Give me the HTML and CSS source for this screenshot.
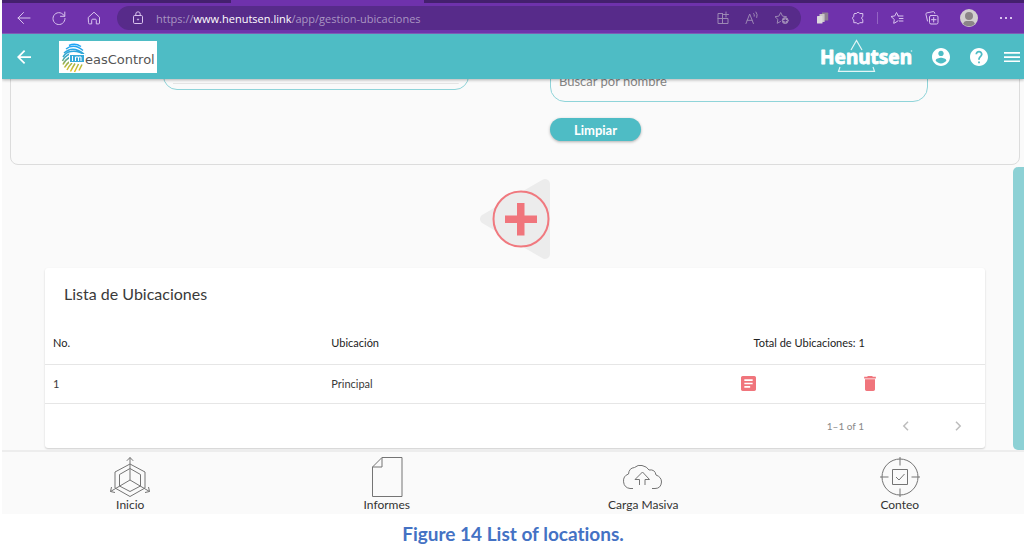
FILE: index.html
```html
<!DOCTYPE html>
<html lang="es">
<head>
<meta charset="utf-8">
<meta name="viewport" content="width=device-width, initial-scale=1">
<title>Henutsen</title>
<link rel="stylesheet" href="styles.css">
</head>
<body>
<figure class="shot">
  <div class="browser">
    <div class="tabstrip"><div class="tab"></div></div>
    <div class="toolbar">
      <button class="tool" aria-label="Atrás"><svg width="14" height="14" viewBox="0 0 14 14"><path d="M13 7H1M6.500 1.500L1 7l5.500 5.500"/></svg></button>
      <button class="tool" aria-label="Actualizar"><svg width="14" height="14" viewBox="0 0 14 14"><path d="M12.500 5.200A6 6 0 1 0 13 7.500M12.800 1v4.300H8.500"/></svg></button>
      <button class="tool" aria-label="Página principal"><svg width="14" height="14" viewBox="0 0 14 14"><path d="M1.500 6.200L7 1.200l5.500 5V12q0 .9-.9.900H9.300V9.200a1 1 0 0 0-1-1H5.700a1 1 0 0 0-1 1v3.700H2.400q-.9 0-.9-.9z"/></svg></button>
      <div class="address">
        <svg class="lock" width="12" height="14" viewBox="0 0 12 14"><rect x="1.500" y="4.500" width="9" height="8" rx="1.200"/><path d="M3.800 4.500V3a2.200 2.200 0 0 1 4.400 0v1.500"/><circle cx="6" cy="8.500" r=".6"/></svg>
        <span class="url">https://<b>www.henutsen.link</b>/app/gestion-ubicaciones</span>
        <button class="tool dim" aria-label="Aplicaciones"><svg width="14" height="14" viewBox="0 0 14 14"><path d="M6.500 2.500H2v10h10V7.500H2M6.500 2.500v10M10 1v5M7.500 3.500h5"/></svg></button>
        <button class="tool dim" aria-label="Leer en voz alta"><svg width="14" height="14" viewBox="0 0 14 14"><path d="M1 12.500L4.700 3l3.700 9.500M2.200 9.300h5M8.700 2.500q1 1.200.6 2.700M11 1q2 2.500.8 5.500"/></svg></button>
        <button class="tool dim" aria-label="Agregar a favoritos"><svg width="16" height="14" viewBox="0 0 16 14"><path d="M6.500 10.500L3.200 12.300l.7-3.900L1 5.700l3.900-.6L6.700 1.500l1.800 3.600 3.900.6"/><circle cx="11.200" cy="9.600" r="3" fill="#a897bd"/><path stroke="#572b8a" d="M11.200 8v3.200M9.600 9.600h3.200"/></svg></button>
      </div>
      <button class="tool" aria-label="Colecciones"><svg width="14" height="14" viewBox="0 0 14 14"><path stroke="none" fill="#8d7f91" d="M6 1.500h5.500q.7 0 .7.700V9.500H6z"/><path stroke="none" fill="#c9c5c7" d="M3.500 3H8q.6 0 .6.600V11H3.500z"/><rect stroke="none" fill="#dcd8dc" x="1" y="5" width="5.500" height="7.500" rx=".6"/></svg></button>
      <button class="tool" aria-label="Extensiones"><svg width="14" height="14" viewBox="0 0 14 14"><path d="M4 2.500h1.500a1.700 1.700 0 0 1 3.200 0h3.100v3a1.700 1.700 0 0 0 0 3.200v3H8.700a1.700 1.700 0 0 1-3.200 0H2.800V8.900a1.700 1.700 0 0 1 0-3.300V3.700q0-1.200 1.200-1.200z"/></svg></button>
      <span class="rule"></span>
      <button class="tool" aria-label="Favoritos"><svg width="14" height="14" viewBox="0 0 14 14"><path d="M8 9.800L5 11.800l-1.300.5.600-3.800L1 5.500l3.800-.6L6.500 1.500l1.700 3.400M8.300 5H13M9.300 7.500H13M9.300 10H13"/></svg></button>
      <button class="tool" aria-label="Pestañas"><svg width="14" height="14" viewBox="0 0 14 14"><rect x="4.500" y="4.500" width="8.500" height="8.500" rx="1.500"/><path d="M8.700 6.500v4.500M6.500 8.700H11M2.500 10L.9 3.200q-.2-1 .9-1.300l6.500-1.300q1.100-.2 1.500 1.700"/></svg></button>
      <button class="tool" aria-label="Perfil"><svg width="18" height="18" viewBox="0 0 18 18" stroke="none"><circle cx="9" cy="9" r="9" fill="#d3cfd0" stroke="none"/><circle cx="9" cy="7" r="4" fill="#8c8588" stroke="none"/><path fill="#8c8588" stroke="none" d="M3 15q1-3 3-3h6q2 0 3 3a9 9 0 0 1-12 0"/></svg></button>
      <button class="tool" aria-label="Más"><svg width="14" height="14" viewBox="0 0 14 14"><path stroke="none" fill="#d9c4ee" d="M1 6h2v2H1zM6 6h2v2H6zM11 6h2v2h-2z"/></svg></button>
    </div>
  </div>

  <div class="app">
    <header class="appbar">
      <button class="icon back" aria-label="Volver"><svg width="14" height="14" viewBox="4 4 16 16"><path fill="#fff" d="M20 11H7.830l5.590-5.590L12 4l-8 8 8 8 1.410-1.410L7.830 13H20v-2z"/></svg></button>
      <svg class="client" width="98" height="32" viewBox="0 0 98 32" role="img" aria-label="easControl">
        <defs><linearGradient id="print" gradientUnits="userSpaceOnUse" x1="0" y1="2" x2="0" y2="31"><stop offset=".1" stop-color="#1fa4f5"/><stop offset=".5" stop-color="#3ba7c0"/><stop offset=".7" stop-color="#9fb24a"/><stop offset="1" stop-color="#e8c51f"/></linearGradient></defs>
        <rect width="98" height="32" fill="#fff"/>
        <path fill="none" stroke="url(#print)" stroke-width="1.500" d="M10 4.500q6-3 12 1M7 8q8-6 17 1.500M5 12q9-8 20 1M4 16q3-5 8-5.500q8-1 14 4M3.500 20q2-4.500 7-7M4 23.500q2-4.500 7-7.500M5.500 26.500q2-4 6-6.500M8 29q2-4 5-7M11.500 30.500q2-4 4.500-8M15.500 31q2-4 4-8M20 29.500q1.500-3 3-6"/>
        <rect x="10.500" y="13.500" width="15" height="8" fill="#35a9da" stroke="#fff"/>
        <path fill="none" stroke="#fff" d="M13.500 15v5M16.500 20v-4h3v4M22 20v-4h-2"/>
        <text x="26" y="23" font-family="DejaVu Sans" font-size="13" fill="#555">easControl</text>
      </svg>
      <svg class="brand" width="94" height="36" viewBox="0 0 94 36" role="img" aria-label="Henutsen">
        <path fill="none" stroke="#e4f5f6" stroke-width="1.200" d="M32 11L37.500 1.500 43 11M21 28l-1.500 4.400h36L54 28"/>
        <text x="1" y="25" font-family="Noto Sans" font-weight="700" font-size="19" fill="#fff" stroke="#fff" stroke-width=".9" stroke-linejoin="round">Henutsen</text>
        <circle cx="92.500" cy="12" r=".8" fill="#d5f0f2"/>
      </svg>
      <button class="icon" aria-label="Cuenta"><svg width="18" height="18" viewBox="2 2 20 20"><path fill="#fff" d="M12 2C6.480 2 2 6.480 2 12s4.480 10 10 10 10-4.480 10-10S17.520 2 12 2zm0 3c1.660 0 3 1.340 3 3s-1.340 3-3 3-3-1.340-3-3 1.340-3 3-3zm0 14.200c-2.500 0-4.710-1.280-6-3.220.030-1.990 4-3.080 6-3.080 1.990 0 5.970 1.090 6 3.080-1.290 1.940-3.500 3.220-6 3.220z"/></svg></button>
      <button class="icon" aria-label="Ayuda"><svg width="18" height="18" viewBox="2 2 20 20"><path fill="#fff" d="M12 2C6.480 2 2 6.480 2 12s4.480 10 10 10 10-4.480 10-10S17.520 2 12 2zm1 17h-2v-2h2v2zm2.070-7.750l-.9.920C13.450 12.900 13 13.500 13 15h-2v-.5c0-1.100.45-2.100 1.170-2.830l1.240-1.260c.37-.36.59-.86.59-1.410 0-1.100-.9-2-2-2s-2 .9-2 2H8c0-2.210 1.790-4 4-4s4 1.790 4 4c0 .88-.36 1.680-.93 2.250z"/></svg></button>
      <button class="icon menu" aria-label="Menú"><svg width="16" height="12" viewBox="0 0 16 12"><path fill="#fff" d="M0 1h16v1.700H0zM0 5.200h16v1.700H0zM0 9.400h16v1.700H0z"/></svg></button>
    </header>

    <main class="content">
      <section class="filters">
        <select class="picker" aria-label="Filtro"><option></option></select>
        <div class="search">
          <input class="name" type="text" placeholder="Buscar por nombre" aria-label="Buscar por nombre">
          <button class="clear">Limpiar</button>
        </div>
      </section>

      <button class="add" aria-label="Agregar"><svg width="74" height="82" viewBox="0 0 74 82">
        <path fill="#ececec" stroke="#ececec" stroke-width="10" stroke-linejoin="round" d="M6 41L66 6v70z"/>
        <circle cx="42" cy="41" r="27.500" fill="#ececec" stroke="#f0797f" stroke-width="2"/>
        <path fill="#f0757c" d="M38 25h7.500v12.500H58V45H45.500v12.500H38V45H26v-7.500h12z"/>
      </svg></button>

      <section class="card">
        <h1 class="title">Lista de Ubicaciones</h1>
        <table class="list">
          <colgroup><col class="c-no"><col class="c-place"><col class="c-act"><col class="c-act"><col></colgroup>
          <thead><tr><th>No.</th><th>Ubicación</th><th class="mid" colspan="2">Total de Ubicaciones: 1</th><th></th></tr></thead>
          <tbody><tr>
            <td>1</td><td>Principal</td>
            <td class="mid"><button class="icon" aria-label="Detalle"><svg width="15" height="15" viewBox="3 3 18 18"><path fill="#f0757c" d="M19 3H5c-1.100 0-2 .9-2 2v14c0 1.100.9 2 2 2h14c1.100 0 2-.9 2-2V5c0-1.100-.9-2-2-2zm-5 14H7v-2h7v2zm3-4H7v-2h10v2zm0-4H7V7h10v2z"/></svg></button></td>
            <td class="mid"><button class="icon" aria-label="Eliminar"><svg width="12" height="15" viewBox="5 3 14 18"><path fill="#f0757c" d="M6 19c0 1.100.9 2 2 2h8c1.100 0 2-.9 2-2V7H6v12zM19 4h-3.500l-1-1h-5l-1 1H5v2h14V4z"/></svg></button></td>
            <td></td>
          </tr></tbody>
        </table>
        <div class="pager">
          <span>1–1 of 1</span>
          <button class="icon" aria-label="Anterior"><svg width="8" height="10" viewBox="0 0 8 10"><path d="M6 .8L1.800 5 6 9.200"/></svg></button>
          <button class="icon" aria-label="Siguiente"><svg width="8" height="10" viewBox="0 0 8 10"><path d="M2 .8L6.200 5 2 9.200"/></svg></button>
        </div>
      </section>
      <div class="thumb"></div>
    </main>

    <nav class="dock">
      <a href="#inicio"><svg width="42" height="42" viewBox="0 0 42 42"><path d="M21 8l15 8v16l-15 8.500L6 32V16zM21 12.500l10.500 6v11.500L21 35.500 10.500 30V18.500zM21 1.500V24M17.800 4.800L21 1.500l3.200 3.300M21 24L1.500 35.500M2.500 31l-1 4.500 4.500 1M21 24l19.500 11.500M39.500 31l1 4.500-4.500 1"/></svg>Inicio</a>
      <a href="#informes"><svg width="42" height="42" viewBox="0 0 42 42"><path d="M16 1.500h20v39H6.500V11zM16 1.500V11H6.500"/></svg>Informes</a>
      <a href="#carga"><svg width="42" height="42" viewBox="0 0 42 42"><path d="M12 32.500H9A7.500 7.500 0 0 1 7.500 18Q8 12 13.500 11.500Q17 8.500 21 9.500Q26 10.500 28 14Q34 13 35 19Q40.500 21 40.500 26Q40 32.500 34 32.500H31M18.500 29v-5.500h-4.500L21.500 16l7 7.500h-4.500V29" transform="translate(-1 0)"/></svg>Carga Masiva</a>
      <a href="#conteo"><svg width="42" height="42" viewBox="0 0 42 42"><circle cx="21" cy="21" r="18"/><path d="M21 1v8.500M21 32.500V41M1 21h8.500M32.500 21H41M13.500 13.500h15v15h-15zM17 21l3 3 5.500-6"/></svg>Conteo</a>
    </nav>
  </div>
  <figcaption class="caption" lang="en">Figure 14 List of locations.</figcaption>
</figure>
</body>
</html>
```
FILE: styles.css
```css
* { box-sizing: border-box; }

body {
  margin: 0;
  background: #fff;
  color: #3a3a3a;
  font-family: Lato, sans-serif;
  font-size: 12px;
  overflow: hidden;
}

button {
  padding: 0;
  border: 0;
  background: none;
  font-family: inherit;
}

svg { display: block; }

.shot {
  margin: 0;
  padding-left: 2px;
}

/* Browser chrome */
.browser { background: #6f32ac; }

.tabstrip {
  height: 3px;
  padding-left: 229px;
  background: #44206e;
}

.tab {
  width: 193px;
  height: 3px;
  background: #6f32ac;
}

.toolbar {
  display: flex;
  align-items: center;
  height: 31px;
  padding: 0 11px 0 15px;
  gap: 21px;
  border-bottom: 1px solid #7f5cb4;
}

.tool {
  flex: none;
  fill: none;
  stroke: #d9c4ee;
  stroke-linecap: round;
  stroke-linejoin: round;
}

.dim { stroke: #9c88b4; }

.address {
  display: flex;
  flex: 1;
  align-items: center;
  height: 24px;
  margin: 0 -6px 0 -5px;
  padding: 0 11px 0 15px;
  gap: 15px;
  border-radius: 12px;
  background: #572b8a;
}

.lock {
  margin-right: -3px;
  fill: none;
  stroke: #d9c4ee;
}

.url {
  flex: 1;
  color: #a996c2;
  font-family: "Open Sans", sans-serif;
  font-size: 11px;
}

.url b {
  color: #fff;
  font-weight: 400;
}

.rule {
  width: 1px;
  height: 12px;
  margin: 0 -9px;
  background: #9465c4;
}

/* Application */
.app { overflow: hidden; }

.appbar {
  position: relative;
  z-index: 1;
  display: flex;
  align-items: center;
  height: 45px;
  padding: 0 4px 0 15px;
  background: #4ebcc5;
  box-shadow: 0 1px 3px rgba(0, 0, 0, .3);
}

.client { margin-left: 28px; }

.brand {
  margin-right: 19px;
  margin-left: auto;
}

.brand ~ .icon { margin-right: 20px; }

.brand ~ .menu { margin: 0 0 0 -4px; }

.content {
  position: relative;
  overflow: hidden;
  padding: 0 4px 2px 8px;
  background: #fafafa;
}

.filters {
  display: grid;
  grid-template-columns: 307fr 379fr;
  column-gap: 10.6%;
  align-items: start;
  margin-top: -40px;
  padding: 20px 9% 23px 15%;
  border: 1px solid #dcdcdc;
  border-radius: 8px;
}

.picker {
  height: 30px;
  border: 1px solid #8fd4d9;
  border-radius: 14px;
  background: linear-gradient(#e4e4e4, #e4e4e4) center 22px / 94% 1px no-repeat;
  appearance: none;
}

.search {
  display: flex;
  flex-direction: column;
  align-items: flex-start;
}

.name {
  width: 100%;
  height: 42px;
  padding: 0 8px;
  border: 1px solid #8fd4d9;
  border-radius: 15px;
  background: none;
  font-family: inherit;
  font-size: 13px;
}

.name::placeholder { color: #858585; }

.clear {
  height: 23px;
  margin-top: 16px;
  padding: 0 24px;
  border-radius: 12px;
  background: #4ebcc5;
  box-shadow: 0 1px 3px rgba(0, 0, 0, .3);
  color: #fff;
  font-size: 13px;
  font-weight: 700;
}

.add {
  display: block;
  margin: 13px auto 8px 469px;
}

.card {
  margin: 0 35px;
  border-radius: 3px;
  background: #fff;
  box-shadow: 0 1px 2px rgba(0, 0, 0, .18);
}

.title {
  margin: 0;
  padding: 15px 19px 16px;
  font-size: 16px;
  font-weight: 400;
  line-height: 22px;
}

.list {
  width: 100%;
  border-collapse: collapse;
  table-layout: fixed;
  font-size: 11px;
}

.c-no { width: 29.6%; }
.c-place { width: 38.7%; }
.c-act { width: 13%; }

.list th,
.list td {
  height: 39px;
  padding: 0 8px;
  border-bottom: 1px solid #e6e6e6;
  font-weight: 400;
  text-align: left;
}

.list th {
  height: 43px;
  color: #222;
}

.list .mid {
  padding: 0;
  text-align: center;
}

.list .icon {
  display: inline-block;
  vertical-align: middle;
}

.pager {
  display: flex;
  align-items: center;
  justify-content: flex-end;
  height: 44px;
  padding-right: 23px;
  gap: 44px;
  color: #8a8a8a;
  font-size: 10px;
}

.pager span { margin-right: -6px; }

.pager svg {
  fill: none;
  stroke: #bdbdbd;
  stroke-width: 1.500;
}

.thumb {
  position: absolute;
  top: 88px;
  right: 0;
  bottom: 0;
  width: 11px;
  border-radius: 5px 0 0 5px;
  background: #8dd1d5;
}

.dock {
  display: grid;
  grid-template-columns: repeat(4, 1fr);
  margin-right: -4px;
  border-top: 2px solid #ededed;
  background: #fafafa;
}

.dock a {
  display: flex;
  flex-direction: column;
  align-items: center;
  padding: 4px 0 2px;
  color: #333;
  line-height: 14px;
  text-decoration: none;
}

.dock svg {
  fill: none;
  stroke: #747474;
}

.caption {
  padding-top: 9px;
  color: #4472c4;
  font-size: 19px;
  font-variant-ligatures: none;
  font-weight: 700;
  line-height: 22px;
  text-align: center;
}
```
